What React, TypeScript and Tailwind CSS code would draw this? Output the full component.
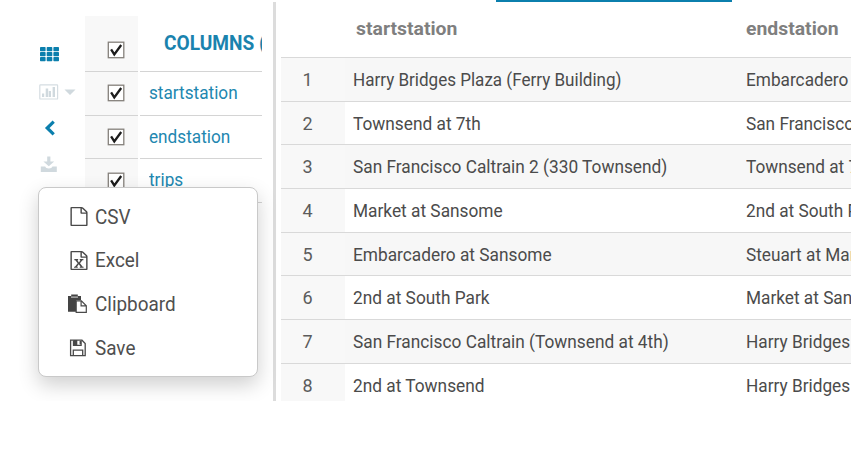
import type { ReactNode } from 'react';

const rows = [
  ['Harry Bridges Plaza (Ferry Building)', 'Embarcadero at Sansome'],
  ['Townsend at 7th', 'San Francisco Caltrain'],
  ['San Francisco Caltrain 2 (330 Townsend)', 'Townsend at 7th'],
  ['Market at Sansome', '2nd at South Park'],
  ['Embarcadero at Sansome', 'Steuart at Market'],
  ['2nd at South Park', 'Market at Sansome'],
  ['San Francisco Caltrain (Townsend at 4th)', 'Harry Bridges Plaza'],
  ['2nd at Townsend', 'Harry Bridges Plaza'],
];

function Check() {
  return (
    <svg width="18" height="18" viewBox="0 0 18 18" className="block shrink-0">
      <rect x="1.3" y="1.2" width="15.5" height="15.5" fill="#fff" stroke="#85817b" strokeWidth="1.3" />
      <path d="M4.1 8.3 7.3 13.4 14.2 4" fill="none" stroke="#1c1c1c" strokeWidth="2.3" />
    </svg>
  );
}

function Toolbar() {
  return (
    <div className="w-[47px] shrink-0 pt-[47px]">
      <svg width="19" height="15" viewBox="0 0 19 15" className="ml-[2px] block" fill="#0b7fad">
        {[0, 5, 10].map((y) =>
          [0, 6.7, 13.4].map((x) => <rect key={`${x}-${y}`} x={x} y={y} width="5.6" height="4.2" rx="0.7" />),
        )}
      </svg>
      <div className="mt-[22px] flex">
        <svg width="37" height="16" viewBox="0 0 37 16" fill="#d0d9de" className="ml-px block">
          <rect x="0.8" y="0.8" width="17.8" height="14.2" rx="0.6" fill="none" stroke="#d5dde2" strokeWidth="1.2" />
          <path d="M3 9.5h2.2V13H3zM6.7 4.5h2.5V13H6.7zM9.8 7h2.2v6H9.8zM13.6 3H16v10h-2.4zM25.5 5.5h11L31 11z" />
        </svg>
      </div>
      <svg width="12" height="16" viewBox="0 0 12 16" className="ml-[6px] mt-[20px] block">
        <path d="M9.7 1.6 3.2 8l6.5 6.4" fill="none" stroke="#0b7fad" strokeWidth="3.2" />
      </svg>
      <svg width="18" height="17" viewBox="0 0 18 17" fill="#d0d9de" className="ml-[2px] mt-[20px] block">
        <path d="M7.2.5h3.2v5h3.8L8.8 10.3 3.4 5.5h3.8zM.8 10.5h4.4c.4 1.3 1.6 2 3.6 2s3.2-.7 3.6-2h4.4V16H.8z" />
      </svg>
    </div>
  );
}

function ColumnRow({ children }: { children: ReactNode }) {
  return (
    <div className="flex h-[43.67px] shrink-0">
      <div className="flex w-[53px] items-center border-b border-[#d4d4d4] bg-[#f8f8f8] pl-[22px]">
        <Check />
      </div>
      <div className="ml-[2px] flex-1 border-b border-[#d4d4d4] pl-[9px] text-[18px] leading-[42.5px] text-[#2287b0]">
        <span className="inline-block origin-left scale-x-[0.955]">{children}</span>
      </div>
    </div>
  );
}

function Columns() {
  return (
    <div className="flex w-[177px] shrink-0 flex-col overflow-hidden pt-[16px]">
      <div className="flex h-[55.9px] shrink-0">
        <div className="flex w-[53px] border-b border-[#d4d4d4] bg-[#f8f8f8] pl-[22px] pt-[25px]">
          <Check />
        </div>
        <div className="ml-[2px] flex-1 overflow-hidden whitespace-nowrap border-b border-[#d4d4d4] pl-[24px] text-[20px] leading-[54px] font-bold text-[#1a83ae]">
          <span className="inline-block origin-left scale-x-[0.955]">COLUMNS (</span>
        </div>
      </div>
      <ColumnRow>startstation</ColumnRow>
      <ColumnRow>endstation</ColumnRow>
      <ColumnRow>trips</ColumnRow>
    </div>
  );
}

const FILE =
  'M1596 380q28 28 48 76t20 88v1152q0 40-28 68t-68 28h-1344q-40 0-68-28t-28-68v-1600q0-40 28-68t68-28h896q40 0 88 20t76 48zm-444-244v376h376q-10-29-22-41l-313-313q-12-12-41-22zm384 1528v-1024h-416q-40 0-68-28t-28-68v-416h-768v1536h1280z';

function FileIcon({ excel = false }: { excel?: boolean }) {
  return (
    <svg width="20" height="19" viewBox="0 0 1792 1792" preserveAspectRatio="none" fill="#494949" className="block">
      <path d={FILE} />
      {excel && (
        <path d="M480 760h340v110h-65l135 205 135-205h-65V760h330v110h-90l-215 290 240 320h80v110H965v-110h75l-165-235-165 235h75v110H450v-110h80l250-320-215-290h-85z" />
      )}
    </svg>
  );
}

function PasteIcon() {
  return (
    <svg width="20" height="20" viewBox="0 0 20 20" className="-ml-px mr-px block">
      <path d="M0 2h3.2V.6h6.6V2H13v4.2H8.3v11.6H0z" fill="#444" />
      <path d="M3 3.1h7" stroke="#fff" strokeWidth="0.8" />
      <path d="M8.2 6.8h5.2l4.9 5v6.6H8.2zM13.1 6.8v5h5.2" fill="#fff" stroke="#4a4a4a" strokeWidth="1.2" />
    </svg>
  );
}

function SaveIcon() {
  return (
    <svg width="20" height="20" viewBox="0 0 20 20" className="block" fill="none" stroke="#494949" strokeWidth="1.3">
      <path d="M1.6 2.2H13l3.2 3.3v12.1H1.6z" />
      <path d="M4.3 17.4v-5.2h9.4v5.2M4.5 2.4v5h7.6v-5" />
      <path d="M4.5 2h3.8v5.3H4.5zM10.6 3h1.5v3.3h-1.5z" fill="#494949" stroke="none" />
    </svg>
  );
}

function MenuItem({ icon, children }: { icon: ReactNode; children: ReactNode }) {
  return (
    <div className="flex h-[43.67px] items-center pl-[30px] text-[20px] text-[#4f4f4f]">
      {icon}
      <span className="ml-[6px] inline-block origin-left scale-x-[0.945]">{children}</span>
    </div>
  );
}

function Results() {
  return (
    <div className="ml-[5px] flex h-[401px] w-[570px] shrink-0 flex-col overflow-hidden">
      <div className="flex h-[58px] shrink-0 border-b border-[#d9d9d9] text-[19px] leading-[57px] font-bold text-[#7f7f7f]">
        <div className="relative w-[465px] shrink-0 pl-[75px]">
          <div className="absolute left-[215px] top-0 h-[2px] w-[236px] bg-[#0b7fad]" />
          <span className="inline-block origin-left scale-x-[1.02]">startstation</span>
        </div>
        <span className="inline-block origin-left scale-x-[1.02]">endstation</span>
      </div>
      {rows.map(([start, end], i) => (
        <div
          key={i}
          className={`flex h-[43.67px] shrink-0 border-b border-[#d9d9d9] text-[18px] leading-[43px] whitespace-nowrap text-[#4b4b4b] ${i % 2 ? 'bg-white' : 'bg-[#f7f7f7]'}`}
        >
          <div className="w-[64px] shrink-0 bg-[#f8f8f8] pr-[11px] text-center text-[#5c5c5c]">{i + 1}</div>
          <div className="w-[401px] shrink-0 pl-[8px]">
            <span className={`inline-block origin-left ${i === 0 ? 'scale-x-[0.947]' : 'scale-x-[0.96]'}`}>{start}</span>
          </div>
          <span className="inline-block shrink-0 origin-left scale-x-[0.957]">{end}</span>
        </div>
      ))}
    </div>
  );
}

export default function App() {
  return (
    <div className="h-[456px] w-[867px] overflow-hidden bg-white font-[Roboto,sans-serif]">
      <div className="relative flex h-[401px] w-[851px] overflow-hidden pl-[38px]">
        <Toolbar />
        <Columns />
        <div className="absolute left-[38px] top-[187px] z-10 h-[190px] w-[219.5px] rounded-[8px] border border-[#c9c9c9] bg-white pt-[7px] shadow-[0_8px_20px_rgba(0,0,0,0.19)]">
          <MenuItem icon={<FileIcon />}>CSV</MenuItem>
          <MenuItem icon={<FileIcon excel />}>Excel</MenuItem>
          <MenuItem icon={<PasteIcon />}>Clipboard</MenuItem>
          <MenuItem icon={<SaveIcon />}>Save</MenuItem>
        </div>
        <div className="ml-[11px] mt-[2px] w-[3px] shrink-0 bg-[#dcdcdc]" />
        <Results />
      </div>
    </div>
  );
}
